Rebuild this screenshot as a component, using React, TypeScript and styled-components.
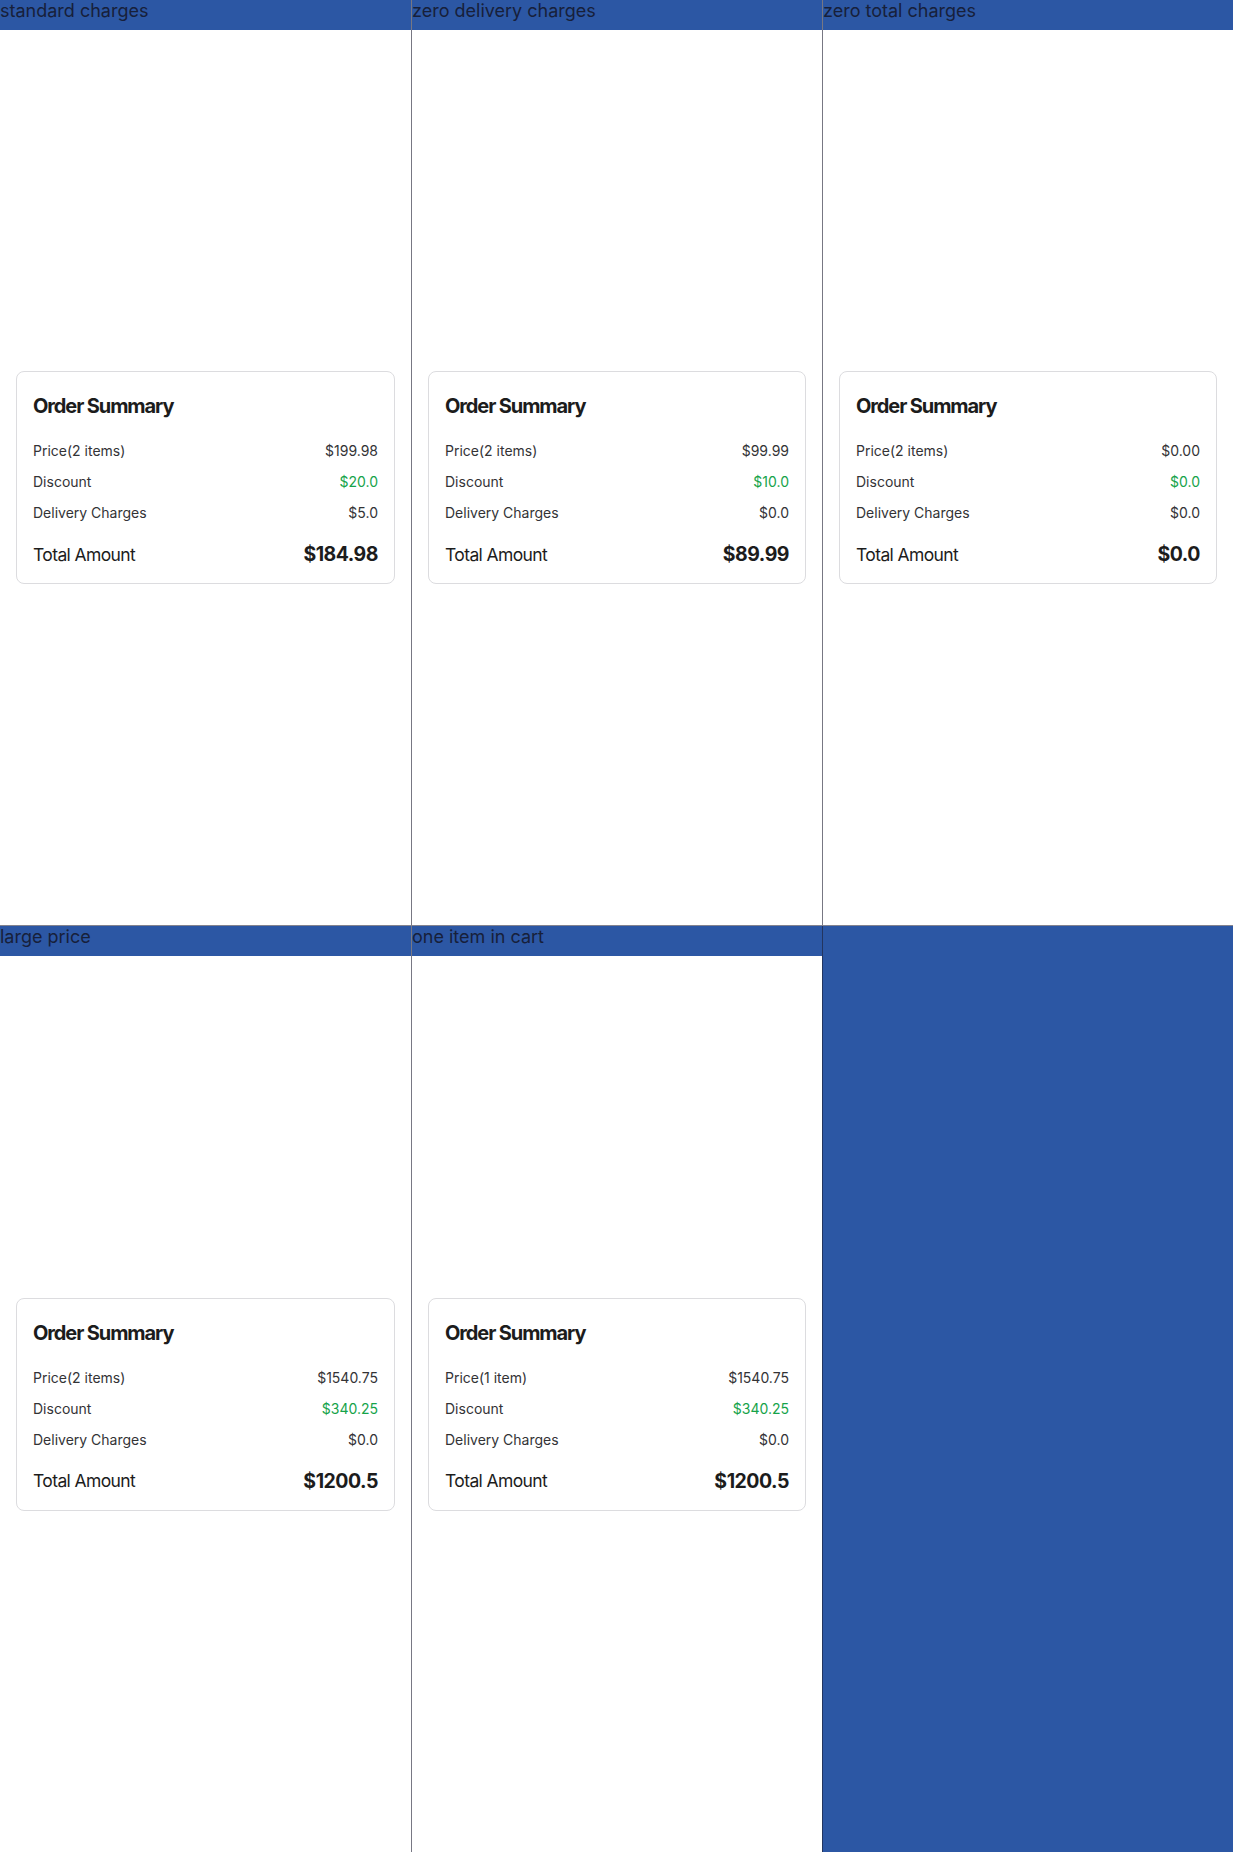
import React from "react";
import styled, { createGlobalStyle } from "styled-components";

const Global = createGlobalStyle`
  html, body {
    margin: 0;
    padding: 0;
    background: #ffffff;
  }
  * { box-sizing: border-box; }
  body {
    font-family: Inter, "Noto Sans", sans-serif;
    color: #1c1c1c;
  }
`;

const Grid = styled.div`
  display: grid;
  grid-template-columns: repeat(3, 1fr);
  grid-template-rows: repeat(2, 926px);
  width: 1233px;
  background: #2c57a4;
`;

const Cell = styled.div<{ $col: number; $row: number; $empty?: boolean }>`
  display: flex;
  flex-direction: column;
  background: ${(p) => (p.$empty ? "transparent" : "#ffffff")};
  border-left: ${(p) => (p.$col > 0 ? "1px solid rgba(30, 30, 50, 0.6)" : "none")};
  border-bottom: ${(p) => (p.$row === 0 ? "1px solid rgba(30, 30, 50, 0.55)" : "none")};
  min-width: 0;
`;

const Header = styled.div`
  height: 30px;
  flex: none;
  background: #2c57a4;
  color: #17203a;
  font-family: Inter, sans-serif;
  font-size: 18px;
  line-height: 22px;
  white-space: nowrap;
  overflow: hidden;
`;

const Stage = styled.div`
  flex: 1;
  display: flex;
  align-items: center;
  padding: 0 16px;
`;

const Card = styled.div`
  width: 100%;
  border: 1px solid #dcdcdf;
  border-radius: 8px;
  background: #ffffff;
  padding: 20px 16px 15px;
  display: flex;
  flex-direction: column;
`;

const Title = styled.h2`
  margin: 0 0 20px;
  font-family: Inter, sans-serif;
  font-size: 20px;
  line-height: 28px;
  font-weight: 700;
  letter-spacing: -0.055em;
  color: #1c1c1c;
`;

const Rows = styled.div`
  display: flex;
  flex-direction: column;
  gap: 10px;
`;

const Row = styled.div`
  display: flex;
  justify-content: space-between;
  align-items: center;
  height: 21px;
  font-size: 14px;
  line-height: 21px;
  color: #333336;
`;

const Value = styled.span<{ $green?: boolean }>`
  color: ${(p) => (p.$green ? "#16a34a" : "#333336")};
`;

const TotalRow = styled.div`
  display: flex;
  justify-content: space-between;
  align-items: center;
  height: 28px;
  margin-top: 17px;
`;

const TotalLabel = styled.span`
  font-size: 17.5px;
  font-weight: 400;
  letter-spacing: -0.035em;
  color: #1c1c1c;
`;

const TotalValue = styled.span`
  font-size: 19.5px;
  font-weight: 700;
  letter-spacing: -0.025em;
  color: #1c1c1c;
`;

type Story = {
  label: string;
  items: string;
  price: string;
  discount: string;
  delivery: string;
  total: string;
};

const stories: Story[] = [
  { label: "standard charges", items: "Price(2 items)", price: "$199.98", discount: "$20.0", delivery: "$5.0", total: "$184.98" },
  { label: "zero delivery charges", items: "Price(2 items)", price: "$99.99", discount: "$10.0", delivery: "$0.0", total: "$89.99" },
  { label: "zero total charges", items: "Price(2 items)", price: "$0.00", discount: "$0.0", delivery: "$0.0", total: "$0.0" },
  { label: "large price", items: "Price(2 items)", price: "$1540.75", discount: "$340.25", delivery: "$0.0", total: "$1200.5" },
  { label: "one item in cart", items: "Price(1 item)", price: "$1540.75", discount: "$340.25", delivery: "$0.0", total: "$1200.5" },
];

const OrderSummary: React.FC<{ s: Story }> = ({ s }) => (
  <Card>
    <Title>Order Summary</Title>
    <Rows>
      <Row>
        <span>{s.items}</span>
        <Value>{s.price}</Value>
      </Row>
      <Row>
        <span>Discount</span>
        <Value $green>{s.discount}</Value>
      </Row>
      <Row>
        <span>Delivery Charges</span>
        <Value>{s.delivery}</Value>
      </Row>
    </Rows>
    <TotalRow>
      <TotalLabel>Total Amount</TotalLabel>
      <TotalValue>{s.total}</TotalValue>
    </TotalRow>
  </Card>
);

export default function App() {
  return (
    <>
      <Global />
      <Grid>
        {stories.map((s, i) => (
          <Cell key={s.label} $col={i % 3} $row={Math.floor(i / 3)}>
            <Header>{s.label}</Header>
            <Stage>
              <OrderSummary s={s} />
            </Stage>
          </Cell>
        ))}
        <Cell $col={2} $row={1} $empty />
      </Grid>
    </>
  );
}
